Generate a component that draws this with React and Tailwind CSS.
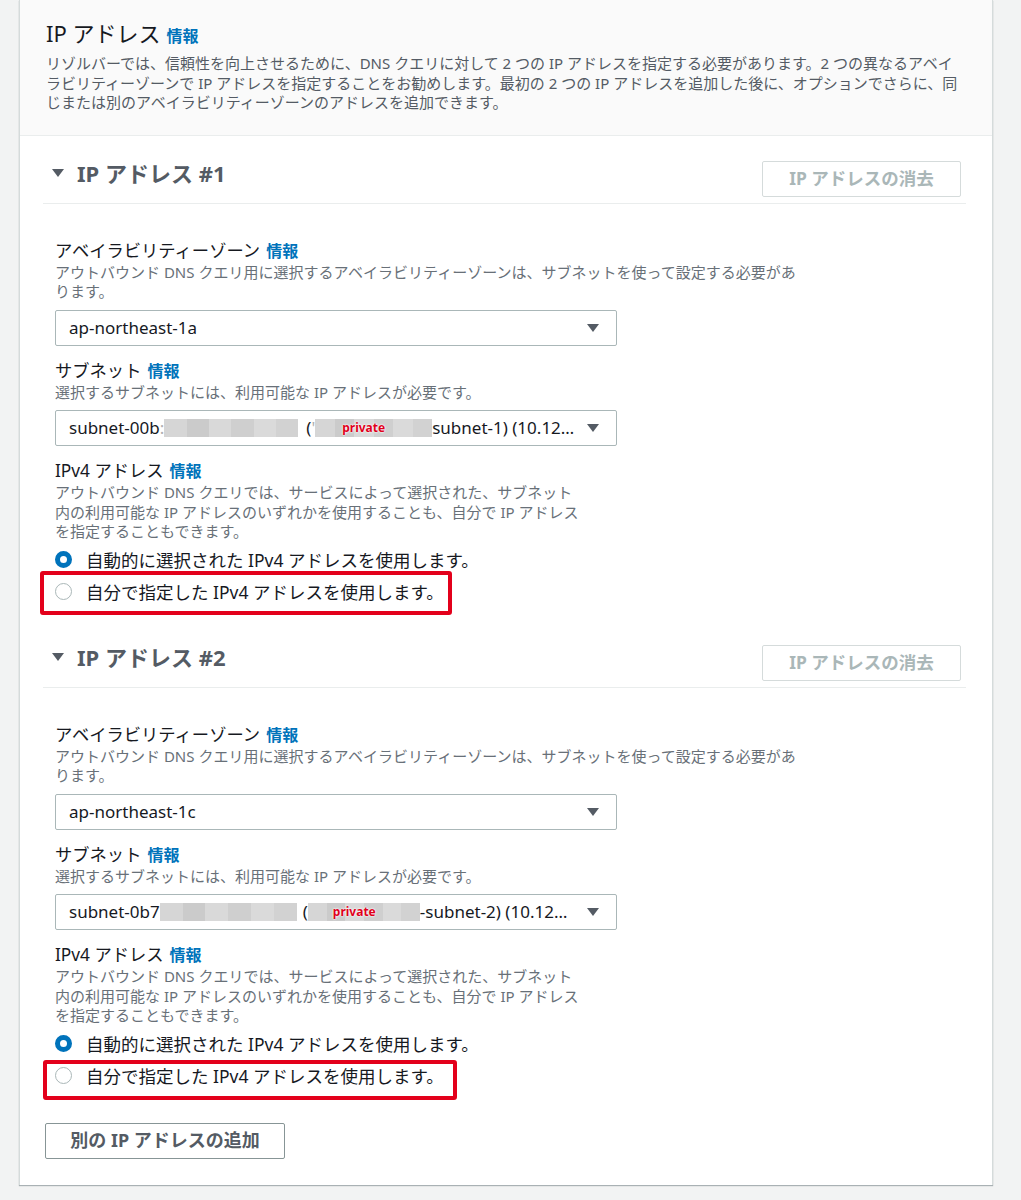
import React from "react";

const FONT = { fontFamily: '"Noto Sans", "Noto Sans CJK JP", sans-serif' };

function Info() {
  return <span className="text-[16px] font-bold text-[#0073bb] ml-[6px]">情報</span>;
}

function Caret({ className = "" }) {
  return (
    <svg width="12" height="8" viewBox="0 0 12 8" className={className}>
      <path d="M0 0 L12 0 L6 8 Z" fill="#545b64" />
    </svg>
  );
}

function Redact({ width, privateLeft }) {
  return (
    <span className="relative inline-flex h-[18px] items-stretch" style={{ width }}>
      <span className="flex-1 bg-[#d6d6d6]" />
      <span className="flex-1 bg-[#cbcbcb]" />
      <span className="flex-1 bg-[#d9d9d9]" />
      <span className="flex-1 bg-[#cfcfcf]" />
      <span className="flex-1 bg-[#dadada]" />
      <span className="flex-1 bg-[#d2d2d2]" />
      {privateLeft !== undefined && (
        <span
          className="absolute top-[1px] text-[12px] leading-[16px] font-bold text-[#e0001b] [text-shadow:0_0_2px_#fff,0_0_2px_#fff]"
          style={{ left: privateLeft }}
        >
          private
        </span>
      )}
    </span>
  );
}

function Select({ children }) {
  return (
    <div className="mt-[8px] flex h-[36px] w-[562px] items-center rounded-[2px] border border-[#aab7b8] bg-white pl-[13px] pr-[17px]">
      <div className="flex flex-1 items-center overflow-hidden whitespace-nowrap text-[17px] text-[#16191f]">
        {children}
      </div>
      <Caret />
    </div>
  );
}

function Radio({ checked, children }) {
  return (
    <div className="flex h-[22px] items-center">
      {checked ? (
        <span className="h-[17px] w-[17px] rounded-full border-[5px] border-[#0073bb] bg-white" />
      ) : (
        <span className="h-[17px] w-[17px] rounded-full border-[1.5px] border-[#aab7b8] bg-white" />
      )}
      <span className="ml-[14px] whitespace-nowrap text-[17.5px] leading-[22px] text-[#16191f]">{children}</span>
    </div>
  );
}

function Desc({ lines }) {
  return (
    <div className="mt-[1px] text-[15px] leading-[19.5px] text-[#687078]">
      {lines.map((l, i) => (
        <div key={i} className="whitespace-nowrap">{l}</div>
      ))}
    </div>
  );
}

function Label({ children }) {
  return (
    <div className="flex items-baseline text-[17.3px] leading-[22px] text-[#16191f]">
      <span>{children}</span>
      <Info />
    </div>
  );
}

function Section({ n, az, subnet, box }) {
  return (
    <div className="ml-[23px] mr-[26px] pt-[25px]">
      <div className="flex items-start justify-between border-b border-[#eaeded] pb-[6px] pl-[9px] pr-[5px]">
        <div className="flex h-[25px] items-center">
          <Caret />
          <span className="ml-[13px] text-[22px] font-bold leading-[25px] text-[#545b64]">IP アドレス #{n}</span>
        </div>
        <div className="flex h-[36px] w-[199px] items-center justify-center rounded-[2px] border border-[#d5dbdb] bg-white text-[17.5px] font-bold text-[#aab7b8]">
          IP アドレスの消去
        </div>
      </div>
      <div className="pl-[12px] pt-[36px] pb-[17px]">
        <Label>アベイラビリティーゾーン</Label>
        <Desc
          lines={[
            "アウトバウンド DNS クエリ用に選択するアベイラビリティーゾーンは、サブネットを使って設定する必要があ",
            "ります。",
          ]}
        />
        <Select>{az}</Select>
        <div className="mt-[14px]">
          <Label>サブネット</Label>
        </div>
        <Desc lines={["選択するサブネットには、利用可能な IP アドレスが必要です。"]} />
        <Select>{subnet}</Select>
        <div className="mt-[14px]">
          <Label>IPv4 アドレス</Label>
        </div>
        <Desc
          lines={[
            "アウトバウンド DNS クエリでは、サービスによって選択された、サブネット",
            "内の利用可能な IP アドレスのいずれかを使用することも、自分で IP アドレス",
            "を指定することもできます。",
          ]}
        />
        <div className="mt-[7px]">
          <Radio checked>自動的に選択された IPv4 アドレスを使用します。</Radio>
        </div>
        <div className="relative mt-[10px]">
          <Radio>自分で指定した IPv4 アドレスを使用します。</Radio>
          <div
            className="pointer-events-none absolute rounded-[3px] border-[4px] border-[#e3001b]"
            style={box}
          />
        </div>
      </div>
    </div>
  );
}

export default function App() {
  return (
    <div className="min-h-[1200px] bg-[#f2f3f3]" style={FONT}>
      <div className="ml-[19px] w-[974px] border-x border-[#d5dbdb] bg-white shadow-[0_1px_1px_0_rgba(0,28,36,0.3)]">
        <div className="border-b border-[#eaeded] bg-[#fafafa] pl-[26px] pt-[19px] pb-[22px]">
          <div className="flex items-baseline">
            <span className="text-[22px] leading-[28px] text-[#16191f]">IP アドレス</span>
            <Info />
          </div>
          <div className="mt-[6px] text-[15px] leading-[19.5px] text-[#545b64]">
            <div className="whitespace-nowrap">
              リゾルバーでは、信頼性を向上させるために、DNS クエリに対して 2 つの IP アドレスを指定する必要があります。2 つの異なるアベイ
            </div>
            <div className="whitespace-nowrap">
              ラビリティーゾーンで IP アドレスを指定することをお勧めします。最初の 2 つの IP アドレスを追加した後に、オプションでさらに、同
            </div>
            <div className="whitespace-nowrap">じまたは別のアベイラビリティーゾーンのアドレスを追加できます。</div>
          </div>
        </div>

        <Section
          n={1}
          az="ap-northeast-1a"
          subnet={
            <>
              <span>subnet-00b</span>
              <span className="text-[#b0b0b0]">:</span>
              <Redact width={134} />
              <span className="ml-[8px]">(</span>
              <span className="text-[#b0b0b0]">'</span>
              <Redact width={117} privateLeft={27} />
              <span>subnet-1) (10.12…</span>
            </>
          }
          box={{ top: -10, left: -15, width: 412, height: 44 }}
        />
        <Section
          n={2}
          az="ap-northeast-1c"
          subnet={
            <>
              <span>subnet-0b7</span>
              <Redact width={137} />
              <span className="ml-[6px]">(</span>
              <Redact width={112} privateLeft={25} />
              <span>-subnet-2) (10.12…</span>
            </>
          }
          box={{ top: -5, left: -12, width: 414, height: 40 }}
        />

        <div className="ml-[25px] pt-[19px] pb-[26px]">
          <div className="flex h-[36px] w-[240px] items-center justify-center rounded-[2px] border border-[#879596] bg-white text-[18px] font-bold text-[#545b64]">
            別の IP アドレスの追加
          </div>
        </div>
      </div>
    </div>
  );
}
